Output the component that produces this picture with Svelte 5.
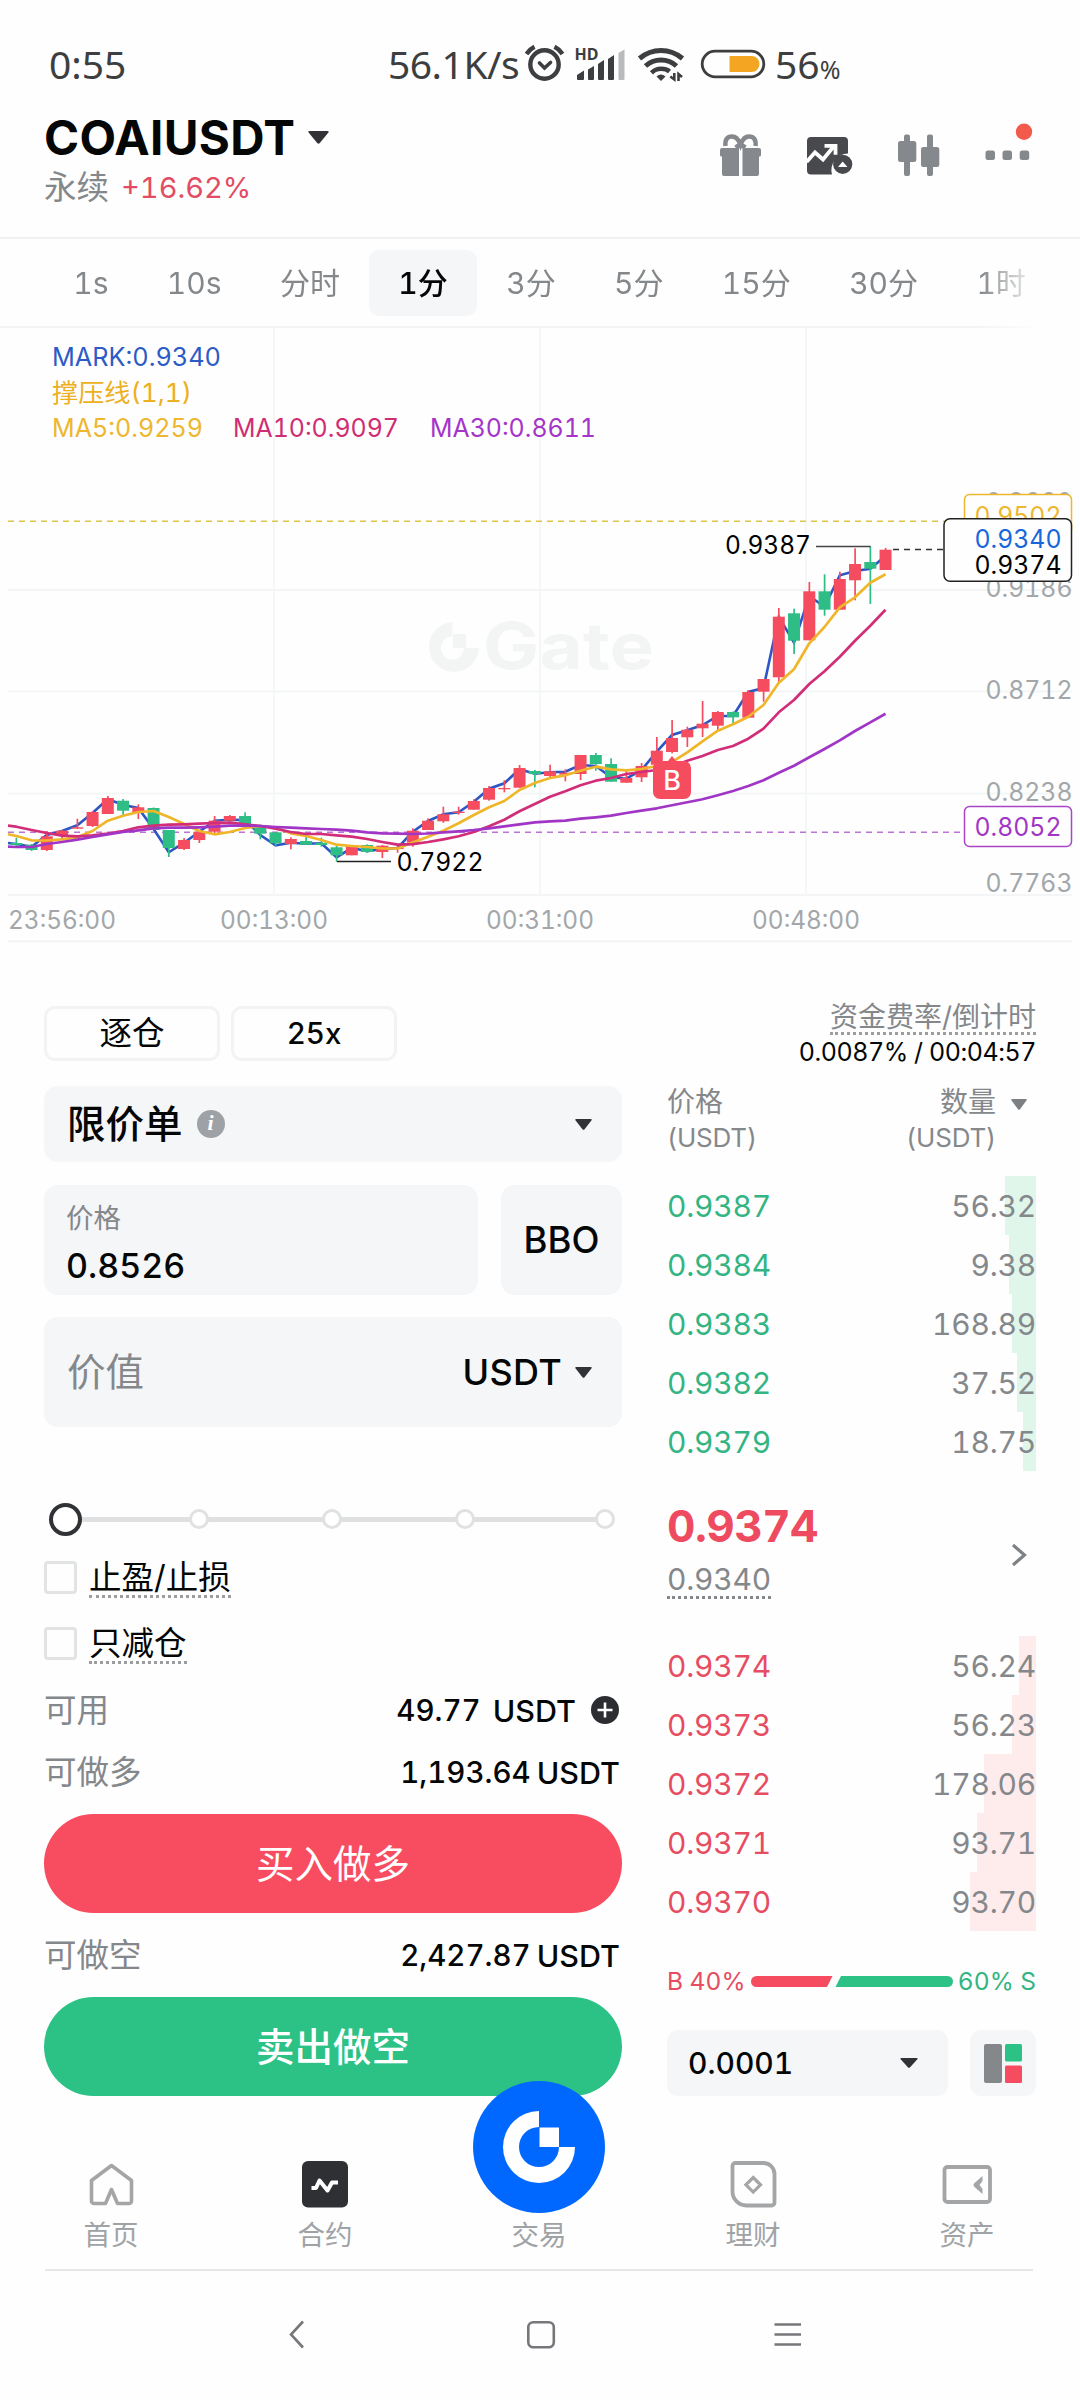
<script>
  const tabs = ["1s", "10s", "分时", "1分", "3分", "5分", "15分", "30分", "1时"];
  const activeTab = "1分";

  // body top, body bottom, wick top, wick bottom, 1 = up (red) / 0 = down (green)
  const candles = [
    [843, 845, 837.7, 848, 0], [844.7, 850, 844, 851, 0], [836.3, 850, 831, 851, 1],
    [830.7, 836, 830, 840, 1], [827.3, 828.7, 818.7, 829, 1], [812, 826, 811, 827, 1],
    [798, 814, 796, 814, 1], [800.7, 810.7, 799, 815, 0], [807.3, 812, 804.3, 819, 1],
    [808, 830, 807.5, 830, 0], [830, 848, 830, 857, 0], [840, 849, 838, 850, 1],
    [831.7, 840, 831, 843, 1], [820.7, 831.7, 816, 833, 1], [816, 820.7, 815, 822.7, 1],
    [816, 824, 812.3, 824, 0], [826, 833.7, 824.7, 839.3, 0], [832.3, 843.3, 832, 846, 0],
    [839, 844, 837.3, 849.3, 1], [841, 844.7, 836.7, 845, 0], [842.7, 845, 837.7, 846.7, 0],
    [847.3, 855.3, 846, 861.7, 0], [845, 855.3, 845, 855.3, 1], [845, 852, 844.3, 852.7, 0],
    [845.7, 852, 845, 858, 1], [847.5, 849, 844.7, 852.7, 1], [830.7, 842.7, 828.3, 846.7, 1],
    [820.7, 830, 818.3, 830, 1], [814.3, 821.3, 806.7, 822.7, 1], [811.7, 813, 806.7, 814.7, 1],
    [801, 809.7, 799.3, 809.7, 1], [788, 799.7, 786, 800.7, 1], [788, 789.3, 780.3, 792.3, 1],
    [768, 787.7, 765, 787.7, 1], [771, 774, 770, 787.3, 0], [771.3, 776, 764.7, 779, 1],
    [772.7, 774.7, 769.3, 781.3, 1], [755, 774, 755, 780, 1], [755, 764, 753, 770.7, 0],
    [764, 781.7, 758.3, 781.7, 0], [778, 782.7, 770.7, 782.7, 1], [766, 777.3, 763, 782, 1],
    [750.7, 764.7, 737, 764.7, 1], [738, 752, 720, 753.3, 1], [729.7, 737.3, 726.7, 747, 1],
    [723.7, 728.3, 701, 737, 1], [712, 725.7, 711, 730.7, 1], [712, 717.3, 711.5, 724, 0],
    [692, 717.7, 690, 717.7, 1], [679, 691.7, 679, 701.7, 1], [616.7, 677.3, 608, 682.3, 1],
    [613.3, 640.7, 608.7, 654, 0], [591.3, 640.3, 582, 640.3, 1], [591.3, 609.7, 574.3, 615.7, 0],
    [579, 609.7, 571.7, 609.7, 1], [564, 580.3, 548.3, 600.3, 1], [562, 568.7, 546.3, 604, 0],
    [549.7, 570, 548, 570, 1],
  ];

  const mark = [
    844, 846.7, 835, 831, 825.3, 813, 799, 805, 808, 829, 852.3, 842.7, 831.7, 820.7, 819.7,
    820, 835, 845.3, 842.7, 843.7, 843.3, 857.3, 848, 851.3, 849, 848, 831.7, 821, 814.3,
    812.3, 801.7, 788.7, 783.3, 769.3, 773.7, 772.3, 771.7, 765, 766, 777.3, 778.7, 770,
    751.7, 735, 730.3, 725, 716, 716, 692, 688, 616.7, 642.7, 596, 606.7, 575.3, 571, 568.7, 556,
  ];
  const ma5 = [
    836, 840.3, 840.5, 839.3, 837.3, 831, 820.7, 815.7, 812, 811, 817, 824, 831, 834.3, 832,
    828, 826, 827.5, 833.3, 836, 840, 844.7, 846, 847, 848.5, 848.5, 842.5, 836.7, 830.7,
    823.3, 815, 807.3, 801, 790, 783, 778, 775.3, 770.7, 766.7, 769.3, 770.3, 769, 766, 762,
    752.3, 741.3, 730.7, 724.3, 716.7, 705, 682.7, 669.3, 643.3, 627, 607.3, 597.3, 582.7, 574.3,
  ];
  const ma10 = [
    826.7, 830, 833, 835.7, 836.3, 835.3, 833.7, 831, 827.3, 825.7, 824.7, 824.3, 823.7, 823,
    822.7, 824.3, 826, 828.7, 832, 834, 834, 835.3, 836.7, 839, 842, 844.7, 844.2, 842, 839.3,
    836.3, 832, 826.3, 819.7, 811.3, 804, 796.7, 791.3, 785.3, 780.7, 778, 774, 772, 770,
    766.7, 760.7, 756, 750, 746, 738.7, 728.7, 712.3, 700, 684, 671.3, 656.7, 640.7, 625.7, 609.7,
  ];
  const ma30 = [
    847, 847, 844, 842, 839.7, 837, 834.3, 832, 830.3, 828.3, 827.7, 827.7, 827.3, 826.7,
    825.7, 825.7, 826, 827, 827.7, 828.3, 829, 829.7, 830.7, 832.3, 833.3, 833.7, 834, 833.5,
    832.3, 831.3, 830, 828.3, 826.3, 824.3, 822.3, 821.3, 820.7, 818.7, 817.3, 815.7, 813,
    810.7, 808.3, 805.3, 802.3, 799.3, 795.3, 791, 786, 780.3, 772.7, 765.7, 757.3, 749, 740.3,
    731, 722.3, 713.7,
  ];

  const cx = (i) => 16.3 + i * 15.25;
  const line = (values, start) =>
    `8,${start} ` + values.map((y, i) => `${cx(i).toFixed(1)},${y}`).join(" ");

  const series = [
    { color: "#2d55c4", points: line(mark, 843) },
    { color: "#efb62a", points: line(ma5, 834.3) },
    { color: "#d12d78", points: line(ma10, 825.7) },
    { color: "#a136c6", points: line(ma30, 846.7) },
  ];

  const gridX = [274, 540, 806];
  const gridY = [590, 691.5, 793.5, 895];
  const priceLabels = [
    { text: "0.9660", y: 511 },
    { text: "0.9186", y: 597 },
    { text: "0.8712", y: 699 },
    { text: "0.8238", y: 801 },
    { text: "0.7763", y: 892 },
  ];
  const timeLabels = [
    { text: "23:56:00", x: 8 },
    { text: "00:13:00", x: 220 },
    { text: "00:31:00", x: 486 },
    { text: "00:48:00", x: 752 },
  ];

  const asks = [
    { price: "0.9387", amount: "56.32", depth: 31 },
    { price: "0.9384", amount: "9.38", depth: 27 },
    { price: "0.9383", amount: "168.89", depth: 24 },
    { price: "0.9382", amount: "37.52", depth: 19 },
    { price: "0.9379", amount: "18.75", depth: 13 },
  ];
  const bids = [
    { price: "0.9374", amount: "56.24", depth: 17 },
    { price: "0.9373", amount: "56.23", depth: 24 },
    { price: "0.9372", amount: "178.06", depth: 52 },
    { price: "0.9371", amount: "93.71", depth: 59 },
    { price: "0.9370", amount: "93.70", depth: 66 },
  ];
</script>

{#snippet caret(w, h, color)}
  <svg class="caret" width={w} height={h} viewBox="0 0 16 10" preserveAspectRatio="none">
    <path d="M1.2 0h13.6q1.6 0 .6 1.3L9 9.3q-1 1.1-2 0L.6 1.3Q-.4 0 1.2 0z" fill={color} />
  </svg>
{/snippet}

{#snippet label(x, y, width, text, fill)}
  <text {x} {y} {fill} textLength={width} lengthAdjust="spacingAndGlyphs">{text}</text>
{/snippet}

{#snippet book(rows, side)}
  <div class="book {side}">
    {#each rows as row}
      <div class="book-row">
        <i class="depth" style="width: {row.depth}px"></i>
        <span class="price">{row.price}</span>
        <span class="amount">{row.amount}</span>
      </div>
    {/each}
  </div>
{/snippet}

<div class="screen">
  <div class="status">
    <span class="clock">0:55</span>
    <span class="speed">56.1K/s</span>
    <svg class="status-icons" width="248" height="44" viewBox="522 42 248 44">
      <g fill="none" stroke="#3d3e40" stroke-width="4.4" stroke-linecap="round">
        <circle cx="544.5" cy="64.5" r="14.2" />
        <path d="M539.5 63l5 5 6-5.500" stroke-width="3.600" />
        <path d="M526.500 54q3.500-5 8-7.200M554.500 46.800q5 2.500 8 7.200" stroke-linecap="butt" />
      </g>
      <text x="574.5" y="59.500" font-size="16" font-weight="700" fill="#3d3e40" textLength="24" lengthAdjust="spacingAndGlyphs">HD</text>
      <g fill="#3d3e40">
        <path d="M577 79v-4l7-4.500v8.500a1 1 0 0 1-1 1h-5a1 1 0 0 1-1-1z" />
        <path d="M588 79v-9.500l6-3.500v13a1 1 0 0 1-1 1h-4a1 1 0 0 1-1-1z" />
        <path d="M598 79v-15l6-4v19a1 1 0 0 1-1 1h-4a1 1 0 0 1-1-1z" />
        <path d="M608 79v-20l6-4v24a1 1 0 0 1-1 1h-4a1 1 0 0 1-1-1z" />
      </g>
      <path d="M618.500 79v-26l6-3.500v29.500a1 1 0 0 1-1 1h-4a1 1 0 0 1-1-1z" fill="#b9babb" />
      <g fill="none" stroke="#3d3e40" stroke-width="5">
        <path d="M639.500 58.500q9.500-8 21.500-8t21.500 8" />
        <path d="M645.500 66q6.500-6 15.500-6t15.500 6" />
        <path d="M651.500 72.800q4-4 9.500-4t8.500 2.700" stroke-width="4.600" />
      </g>
      <path d="M656.500 76.500q4.500-4 9 0l-4.500 4.500z" fill="#3d3e40" />
      <path d="M674.300 73v6.500l-4-3M678.500 81v-7l3.500 3" fill="none" stroke="#3d3e40" stroke-width="2.600" />
      <rect x="702.200" y="51.200" width="61.600" height="25.600" rx="12.800" fill="none" stroke="#3d3e40" stroke-width="2.800" />
      <path d="M729.500 56h22a8 8 0 0 1 8 8 8 8 0 0 1-8 8h-22z" fill="#f4a622" />
    </svg>
    <span class="percent">56<small>%</small></span>
  </div>

  <header>
    <div class="pair">
      <div class="symbol"><span>COAIUSDT</span>{@render caret(21, 13, "#303236")}</div>
      <div class="change"><span>永续</span><b>+16.62%</b></div>
    </div>
    <svg class="tools" width="330" height="74" viewBox="712 116 330 74">
      <g fill="#85888c">
        <path d="M722 148h17v28h-15a2 2 0 0 1-2-2v-17.500h-.5a1.500 1.500 0 0 1-1.500-1.500v-5a2 2 0 0 1 2-2z" />
        <path d="M742.500 148h16.500a2 2 0 0 1 2 2v5a1.500 1.500 0 0 1-1.500 1.500h-.5v17.500a2 2 0 0 1-2 2h-14.500z" />
      </g>
      <path d="M725.500 146q-1-9.500 6.500-9.500 5.500 0 8.500 8 3-8 8.500-8 7.500 0 6.500 9.500M740.500 144.500l-5 3M740.500 144.500l5 3" fill="none" stroke="#85888c" stroke-width="4.500" />
      <path d="M811 137h33a4 4 0 0 1 4 4v12.500a16.500 16.500 0 0 0-16 21h-21a4 4 0 0 1-4-4v-29.500a4 4 0 0 1 4-4z" fill="#48494d" />
      <path d="M806.500 162l8.500-9.500 8 7 11.500-14M824.500 145.800h11v9" fill="none" stroke="#fefefe" stroke-width="3.800" />
      <circle cx="842.700" cy="164.300" r="9.600" fill="#48494d" />
      <path d="M838 167l4.700-5.500 4.700 5.500z" fill="#fefefe" />
      <g fill="#85888c">
        <rect x="898" y="141" width="18.300" height="21" rx="2.500" />
        <rect x="904" y="134.500" width="6" height="41.500" rx="2" />
        <rect x="921" y="147" width="18.300" height="20" rx="2.500" />
        <rect x="927" y="134.500" width="6" height="41.500" rx="2" />
        <rect x="985.500" y="150.500" width="9.500" height="9.500" rx="2.500" />
        <rect x="1002.500" y="150.500" width="9.500" height="9.500" rx="2.500" />
        <rect x="1019.700" y="150.500" width="9.500" height="9.500" rx="2.500" />
      </g>
      <circle cx="1024" cy="131.800" r="8.200" fill="#f25b4c" />
    </svg>
  </header>

  <nav class="tabs">
    {#each tabs as tab}
      <span class:active={tab === activeTab}>{tab}</span>
    {/each}
  </nav>

  <svg class="chart" width="1080" height="615" viewBox="0 328 1080 615">
    <g stroke="#f4f5f6" stroke-width="1.800">
      {#each gridX as x}<line x1={x} x2={x} y1="328" y2="895" />{/each}
      {#each gridY as y}<line x1="8" x2="1072" y1={y} y2={y} />{/each}
      <line x1="8" x2="1072" y1="941.300" y2="941.300" stroke="#eff1f2" />
    </g>

    <g class="watermark" fill="#f3f5f5">
      <path d="M452.500 622a25 25 0 1 0 26.500 26h-15a11.500 11.500 0 1 1-11.500-11.500z" />
      <rect x="453" y="634" width="13" height="14" />
      <text x="483" y="669" font-size="64" font-weight="700" textLength="171" lengthAdjust="spacingAndGlyphs">Gate</text>
    </g>

    {@render label(52, 366, 169, "MARK:0.9340", "#2d5bc5")}
    {@render label(52, 402, 140, "撑压线(1,1)", "#edb021")}
    {@render label(52, 437, 151, "MA5:0.9259", "#edb72f")}
    {@render label(233, 437, 166, "MA10:0.9097", "#cf2e73")}
    {@render label(430, 437, 166, "MA30:0.8611", "#a535c9")}

    <line x1="8" x2="964" y1="521.300" y2="521.300" stroke="#dcc64a" stroke-width="1.600" stroke-dasharray="6 5" />
    <line x1="8" x2="964" y1="832.300" y2="832.300" stroke="#bb74d6" stroke-width="1.400" stroke-dasharray="6 5" />
    <line x1="893" x2="943" y1="549.400" y2="549.400" stroke="#333" stroke-width="1.500" stroke-dasharray="6 5" />

    <polyline points={series[0].points} fill="none" stroke={series[0].color} stroke-width="2.600" />
    {#each candles as [top, bottom, high, low, up], i}
      <g fill={up ? "#f64c60" : "#2ebd85"}>
        <rect x={cx(i) - 0.8} y={high} width="1.7" height={low - high} />
        <rect x={cx(i) - 6} y={top} width="12" height={bottom - top} />
      </g>
    {/each}
    {#each series.slice(1) as s}
      <polyline points={s.points} fill="none" stroke={s.color} stroke-width="2.700" stroke-linejoin="round" />
    {/each}

    <path d="M653 768a7 7 0 0 1 7-7h8l4-5 4 5h8a7 7 0 0 1 7 7v24a7 7 0 0 1-7 7h-24a7 7 0 0 1-7-7z" fill="#f64c60" />
    <text x="672" y="789.500" font-size="27" font-weight="500" fill="#fff" text-anchor="middle">B</text>

    <path d="M816 546.600h54.500" stroke="#444" stroke-width="1.500" />
    <path d="M337 861.400h54" stroke="#222" stroke-width="1.500" />
    {@render label(725, 553.5, 86, "0.9387", "#000")}
    {@render label(396.5, 871, 87, "0.7922", "#000")}

    {#each priceLabels as l}{@render label(985.5, l.y, 87, l.text, "#a3a7a9")}{/each}
    {#each timeLabels as l}{@render label(l.x, 929, 108, l.text, "#a3a7a9")}{/each}

    <g fill="#fefefe" stroke-width="1.500">
      <rect x="964.500" y="494.500" width="107" height="40" rx="5" stroke="#edb72f" />
      {@render label(974.5, 525, 87, "0.9502", "#edb72f")}
      <rect x="944" y="518.700" width="127.500" height="62.500" rx="6" stroke="#222" />
      {@render label(974.5, 547.5, 87, "0.9340", "#1766dc")}
      {@render label(974.5, 574, 87, "0.9374", "#000")}
      <rect x="964.500" y="806.500" width="107" height="40" rx="5" stroke="#a945c6" />
      {@render label(974.5, 836.3, 87, "0.8052", "#a136c6")}
    </g>
  </svg>

  <main>
    <section class="form">
      <div class="modes"><span class="margin">逐仓</span><span class="leverage">25x</span></div>

      <div class="field type">
        <span>限价单</span>
        <i class="info">i</i>
        {@render caret(17, 11, "#303236")}
      </div>

      <div class="price-row">
        <div class="field price-field"><small>价格</small><span>0.8526</span></div>
        <div class="field bbo">BBO</div>
      </div>

      <div class="field value">
        <span class="placeholder">价值</span>
        <span class="unit">USDT</span>
        {@render caret(17, 11, "#303236")}
      </div>

      <div class="slider"><i class="thumb"></i><i></i><i></i><i></i><i></i></div>

      <label class="check"><i></i><span>止盈/止损</span></label>
      <label class="check"><i></i><span>只减仓</span></label>

      <div class="line available">
        <span>可用</span><b>49.77</b><b class="cur">USDT</b>
        <svg width="28" height="28" viewBox="0 0 28 28">
          <circle cx="14" cy="14" r="14" fill="#2b2d30" />
          <path d="M14 6.500v15M6.500 14h15" stroke="#fff" stroke-width="2.600" />
        </svg>
      </div>
      <div class="line long"><span>可做多</span><b>1,193.64</b><b class="cur">USDT</b></div>
      <button class="buy">买入做多</button>
      <div class="line short"><span>可做空</span><b>2,427.87</b><b class="cur">USDT</b></div>
      <button class="sell">卖出做空</button>
    </section>

    <section class="orders">
      <div class="funding">
        <span class="funding-title">资金费率/倒计时</span>
        <span class="funding-value">0.0087% / 00:04:57</span>
      </div>
      <div class="heads">
        <div>价格<br /><em>(USDT)</em></div>
        <div class="qty">
          <p>数量<br /><em>(USDT)</em></p>
          {@render caret(16, 11, "#7d8083")}
        </div>
      </div>

      {@render book(asks, "asks")}

      <div class="last">
        <div>
          <strong>0.9374</strong>
          <span>0.9340</span>
        </div>
        <svg width="16" height="24" viewBox="0 0 16 24">
          <path d="M2 2l11.500 10L2 22" fill="none" stroke="#7f8285" stroke-width="3.200" />
        </svg>
      </div>

      {@render book(bids, "bids")}

      <div class="ratio">
        <span class="b">B 40%</span>
        <svg width="202" height="11" viewBox="0 0 202 11">
          <path d="M5.500 0H81.500L76 11H5.500a5.500 5.500 0 0 1 0-11z" fill="#f64c60" />
          <path d="M90 0h106.500a5.500 5.500 0 0 1 0 11H84.500z" fill="#2cc286" />
        </svg>
        <span class="s">60% S</span>
      </div>

      <div class="precision">
        <div class="step"><span>0.0001</span>{@render caret(18, 10, "#303236")}</div>
        <div class="layout">
          <svg width="38" height="39" viewBox="0 0 38 39">
            <rect width="18" height="39" rx="2" fill="#85888b" />
            <rect x="21" width="17" height="17.500" rx="1.500" fill="#2cc286" />
            <rect x="21" y="21.500" width="17" height="17.500" rx="1.500" fill="#f64c60" />
          </svg>
        </div>
      </div>
    </section>
  </main>

  <footer>
    <div class="item">
      <svg width="50" height="50" viewBox="87 2160 50 50">
        <path d="M92.500 2181.500L112.500 2166.500 132.500 2181.500V2202a2.500 2.500 0 0 1-2.500 2.500H118.500L112.500 2190.500 106.500 2204.500H95a2.500 2.500 0 0 1-2.500-2.500z" fill="none" stroke="#a3a5a7" stroke-width="3.600" stroke-linejoin="round" />
      </svg>
      首页
    </div>
    <div class="item">
      <svg width="50" height="50" viewBox="300.500 2160 50 50">
        <rect x="302.500" y="2162" width="46" height="46.500" rx="6" fill="#2e3033" />
        <path d="M312 2189h4.500l3.500-7.500 8 10 4.500-8h6" fill="none" stroke="#fff" stroke-width="4" stroke-linejoin="round" />
      </svg>
      合约
    </div>
    <div class="item trade">
      <svg class="fab" width="132" height="132" viewBox="0 0 132 132">
        <circle cx="66" cy="66" r="66" fill="#0068ff" />
        <path d="M66 30a36 36 0 1 0 36 36H86a20 20 0 1 1-20-20z" fill="#fff" />
        <path d="M66.500 46.500H86V66H66.500z" fill="#fff" />
      </svg>
      交易
    </div>
    <div class="item">
      <svg width="50" height="50" viewBox="728.500 2160 50 50">
        <path d="M736 2164h28a11 11 0 0 1 11 11v28.500a3 3 0 0 1-3 3H747a14 14 0 0 1-14-14V2167a3 3 0 0 1 3-3z" fill="none" stroke="#a3a5a7" stroke-width="3.800" />
        <path d="M753.700 2178.500l7.300 7.300-7.300 7.300-7.300-7.300z" fill="none" stroke="#a3a5a7" stroke-width="3.200" />
      </svg>
      理财
    </div>
    <div class="item">
      <svg width="50" height="50" viewBox="941.500 2160 50 50">
        <rect x="944" y="2168" width="45.500" height="35" rx="3" fill="none" stroke="#a3a5a7" stroke-width="3.800" />
        <path d="M982 2177v5l-3 4 3 4v5l-8-7q-2-2 0-4z" fill="#a3a5a7" />
      </svg>
      资产
    </div>
  </footer>

  <div class="system">
    <svg width="520" height="30" viewBox="285 2320 520 30" fill="none" stroke="#75777a" stroke-width="2.600">
      <path d="M303 2321.500L291 2334.500 303 2347.500" />
      <rect x="528.300" y="2322.300" width="25.500" height="25" rx="5" />
      <path d="M774.500 2324.500h26.500M774.500 2334.500h26.500M774.500 2344.500h26.500" />
    </svg>
  </div>
</div>

<style>
  :global(body) {
    background: #fefefe;
  }

  .screen {
    width: 1080px;
    height: 2400px;
    overflow: hidden;
    display: flex;
    flex-direction: column;
    background: #fefefe;
    color: #050606;
    font-family: Inter, "Noto Sans CJK SC", sans-serif;
    font-feature-settings: "tnum" 1;
  }

  i,
  em {
    font-style: normal;
  }

  .caret {
    flex: none;
  }

  .status {
    height: 109px;
    display: flex;
    align-items: flex-start;
    padding: 37px 0 0 49px;
    box-sizing: border-box;
    font-family: "Noto Sans", sans-serif;
    font-size: 39px;
    line-height: 54px;
    color: #3d3e40;
  }

  .clock {
    width: 339px;
  }

  .speed {
    width: 134px;
    letter-spacing: -0.5px;
    white-space: nowrap;
  }

  .status-icons {
    margin-top: 5px;
  }

  .percent {
    margin-left: 5px;
  }

  .percent small {
    font-size: 25px;
  }

  header {
    height: 130px;
    display: flex;
    justify-content: space-between;
    border-bottom: 2px solid #f0f1f2;
    box-sizing: border-box;
    padding: 0 38px 0 44px;
  }

  .symbol {
    display: flex;
    align-items: center;
    gap: 13px;
    font-size: 47.500px;
    font-weight: 700;
    line-height: 57px;
    letter-spacing: 0.3px;
  }

  .change {
    display: flex;
    align-items: center;
    gap: 12px;
    font-size: 32.500px;
    line-height: 44px;
    color: #85888b;
  }

  .change b {
    font-size: 29px;
    font-weight: 400;
    color: #e24c63;
  }

  .tools {
    margin-top: 7px;
  }

  .tabs {
    height: 89px;
    display: flex;
    align-items: center;
    padding-left: 44px;
    box-sizing: border-box;
    border-bottom: 2px solid #f3f4f5;
    font-size: 30px;
    color: #85888b;
    white-space: nowrap;
    mask-image: linear-gradient(90deg, #000 980px, transparent 1040px);
  }

  .tabs span {
    padding: 0 29.200px;
    line-height: 66px;
    border-radius: 10px;
  }

  .tabs .active {
    background: #f4f6f8;
    color: #050606;
    font-weight: 500;
  }

  .chart {
    display: block;
    flex: none;
    font-size: 25px;
  }

  main {
    display: flex;
    justify-content: space-between;
    padding: 0 44px;
    height: 1154px;
  }

  .form {
    width: 578px;
    padding-top: 63px;
  }

  .field {
    background: #f4f6f8;
    border-radius: 14px;
    box-sizing: border-box;
    display: flex;
    align-items: center;
  }

  .modes {
    display: flex;
    gap: 11px;
  }

  .modes span {
    height: 55px;
    box-sizing: border-box;
    border: 3px solid #f1f3f4;
    border-radius: 11px;
    text-align: center;
    line-height: 49px;
  }

  .margin {
    width: 176px;
    font-size: 32.500px;
  }

  .leverage {
    width: 166px;
    font-size: 29.500px;
    font-weight: 500;
  }

  .type {
    height: 76px;
    margin-top: 25px;
    padding: 0 30px 0 23px;
    font-size: 38.500px;
    font-weight: 500;
  }

  .type span {
    margin-top: -7px;
  }

  .type .caret {
    margin-left: auto;
  }

  .info {
    width: 28px;
    height: 28px;
    margin-left: 14px;
    border-radius: 50%;
    background: #9ea2a6;
    color: #fff;
    font: italic 700 22px/26px "Liberation Serif", serif;
    text-align: center;
  }

  .price-row {
    display: flex;
    justify-content: space-between;
    margin-top: 23px;
  }

  .price-field {
    width: 434px;
    height: 110px;
    padding: 10px 22px 0;
    flex-direction: column;
    align-items: flex-start;
    font-size: 34px;
    font-weight: 500;
  }

  .price-field small {
    font-size: 27.500px;
    font-weight: 400;
    line-height: 46px;
    color: #85888b;
  }

  .price-field span {
    line-height: 50px;
  }

  .bbo {
    width: 121px;
    justify-content: center;
    font-size: 36.500px;
    font-weight: 500;
  }

  .value {
    height: 110px;
    margin-top: 22px;
    padding: 0 30px 0 23px;
    font-size: 36px;
    font-weight: 500;
  }

  .placeholder {
    flex: 1;
    margin-top: -7px;
    font-size: 38.500px;
    font-weight: 400;
    color: #85888b;
  }

  .unit {
    margin-right: 13px;
    letter-spacing: 0.3px;
  }

  .slider {
    display: flex;
    align-items: center;
    gap: 113.300px;
    height: 34px;
    margin: 75px 6px 0 5px;
    background: linear-gradient(#dfe0e1, #dfe0e1) center / 530px 5px no-repeat;
  }

  .slider i {
    flex: none;
    width: 20px;
    height: 20px;
    box-sizing: border-box;
    border: 3px solid #e0e1e2;
    border-radius: 50%;
    background: #fff;
  }

  .slider .thumb {
    width: 33px;
    height: 33px;
    margin-right: -6.500px;
    border: 4px solid #303236;
  }

  .slider i:last-child {
    margin-left: 6px;
  }

  .check {
    display: flex;
    align-items: center;
    gap: 12px;
    height: 34px;
    margin-top: 32px;
  }

  .slider + .check {
    margin-top: 24px;
  }

  .check i {
    width: 33px;
    height: 33px;
    box-sizing: border-box;
    border: 3px solid #e2e3e4;
    border-radius: 4px;
  }

  .check span {
    height: 36px;
    margin-top: 5px;
    font-size: 32.500px;
    line-height: 31px;
    border-bottom: 3px dotted #9b9d9f;
    box-sizing: border-box;
  }

  .line {
    display: flex;
    align-items: center;
    height: 44px;
    font-size: 29.500px;
  }

  .line span {
    flex: 1;
    margin-top: -5px;
    font-size: 32.500px;
    color: #85888b;
  }

  .line b {
    font-weight: 500;
  }

  .line .cur {
    margin-left: 6px;
    font-size: 30.500px;
  }

  .line svg {
    margin: 0 3px 0 15px;
  }

  .available {
    margin-top: 28px;
  }

  .available .cur {
    margin-left: 12px;
  }

  .long {
    margin-top: 18px;
  }

  .long b:last-child,
  .short b:last-child {
    margin-right: 2px;
  }

  button {
    display: block;
    width: 578px;
    height: 99px;
    border: 0;
    padding: 0;
    border-radius: 50px;
    color: #fff;
    font: 400 38.500px/94px Inter, "Noto Sans CJK SC", sans-serif;
  }

  .buy {
    margin-top: 20px;
    background: #f84d60;
  }

  .short {
    margin-top: 20px;
  }

  .sell {
    margin-top: 20px;
    background: #2cc286;
    font-weight: 500;
  }

  .orders {
    width: 369px;
    padding-top: 57px;
    color: #85888b;
  }

  .funding {
    display: flex;
    flex-direction: column;
    align-items: flex-end;
  }

  .funding-title {
    height: 33px;
    margin-top: 2px;
    font-size: 28px;
    line-height: 30px;
    border-bottom: 3px dotted #9b9d9f;
    box-sizing: border-box;
  }

  .funding-value {
    margin-top: 2px;
    font-size: 25px;
    line-height: 31px;
    letter-spacing: -0.45px;
    color: #050606;
  }

  .heads {
    display: flex;
    justify-content: space-between;
    height: 70px;
    margin-top: 17px;
    font-size: 28px;
    line-height: 35px;
  }

  .heads em {
    font-size: 26px;
    letter-spacing: -0.2px;
  }

  .qty {
    display: flex;
    text-align: right;
    gap: 15px;
    margin-right: 9px;
  }

  .qty p {
    margin: 0;
  }

  .qty .caret {
    margin-top: 14px;
  }

  .book {
    margin-top: 21px;
  }

  .book-row {
    position: relative;
    display: flex;
    justify-content: space-between;
    height: 59px;
    line-height: 61px;
    font-size: 30px;
    letter-spacing: -0.2px;
  }

  .depth {
    position: absolute;
    right: 0;
    top: 0;
    height: 59px;
  }

  .asks .depth {
    background: #e0f6ea;
  }

  .bids .depth {
    background: #feebec;
  }

  .asks .price {
    color: #33b483;
  }

  .bids .price {
    color: #e64d62;
  }

  .amount {
    position: relative;
  }

  .last {
    display: flex;
    justify-content: space-between;
    align-items: center;
    height: 101px;
    margin-top: 33px;
    padding-right: 9px;
  }

  .last div {
    display: flex;
    flex-direction: column;
    align-items: flex-start;
    align-self: flex-start;
  }

  .last strong {
    font-size: 44px;
    font-weight: 650;
    line-height: 44px;
    letter-spacing: -0.5px;
    color: #ee4b60;
  }

  .last span {
    margin-top: 15px;
    height: 36px;
    font-size: 30px;
    line-height: 33px;
    letter-spacing: -0.2px;
    border-bottom: 3px dotted #85888b;
    box-sizing: border-box;
  }

  .bids {
    margin-top: 31px;
  }

  .ratio {
    display: flex;
    align-items: center;
    justify-content: space-between;
    height: 30px;
    margin-top: 35px;
    font-size: 24.500px;
    white-space: nowrap;
  }

  .ratio .b {
    color: #e64d62;
  }

  .ratio .s {
    color: #33b483;
  }

  .precision {
    display: flex;
    justify-content: space-between;
    margin-top: 34px;
  }

  .step,
  .layout {
    height: 66px;
    border-radius: 11px;
    background: #f4f6f8;
    display: flex;
    align-items: center;
    justify-content: center;
  }

  .step {
    width: 281px;
    box-sizing: border-box;
    padding: 0 30px 0 21px;
    justify-content: space-between;
    font-size: 30px;
    font-weight: 500;
    color: #050606;
  }

  .layout {
    width: 66px;
  }

  footer {
    display: flex;
    justify-content: space-between;
    height: 172px;
    margin: 0 47px 0 45px;
    border-bottom: 2px solid #e6e7e8;
  }

  .item {
    position: relative;
    width: 132px;
    padding-top: 62px;
    display: flex;
    flex-direction: column;
    align-items: center;
    font-size: 27.500px;
    line-height: 53px;
    color: #a0a3a6;
  }

  .trade {
    padding-top: 112px;
  }

  .fab {
    position: absolute;
    top: -16px;
    left: 0;
  }

  .system {
    padding: 49px 0 0 285px;
  }
</style>
